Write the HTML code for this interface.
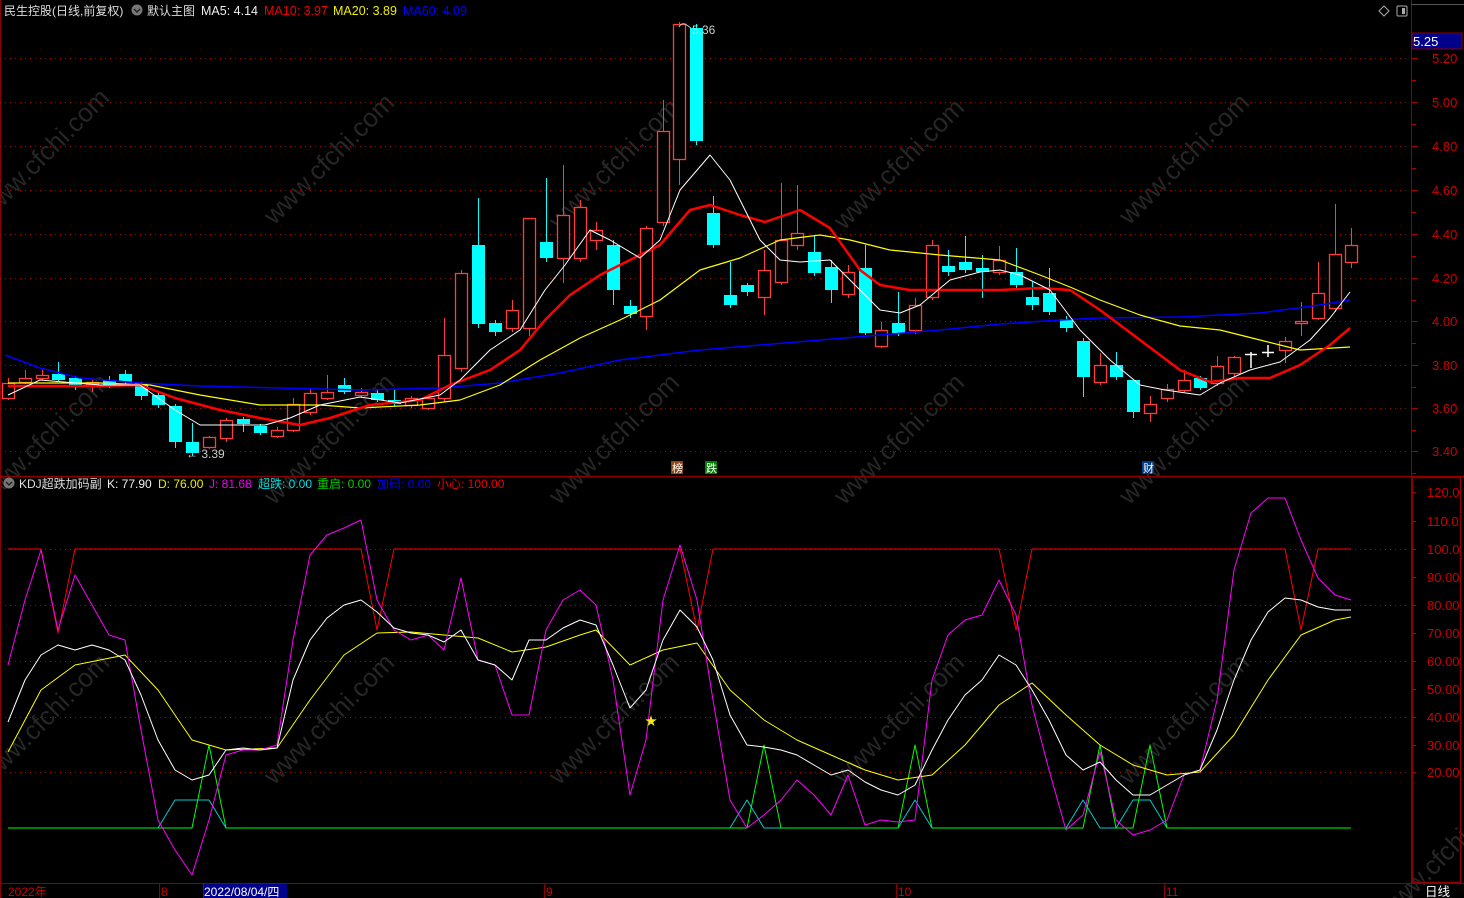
<!DOCTYPE html>
<html><head><meta charset="utf-8">
<style>
html,body{margin:0;padding:0;background:#000;width:1464px;height:898px;overflow:hidden}
svg{display:block}
text{font-family:"Liberation Sans","Noto Sans CJK SC",sans-serif}
</style></head>
<body>
<svg id="s" width="1464" height="898" xmlns="http://www.w3.org/2000/svg">
<rect width="1464" height="898" fill="#000"/>
<g id="wm"></g>
<g id="grid"></g>
<line x1="1411.5" y1="0" x2="1411.5" y2="898" stroke="#8b0000" stroke-width="1"/>
<line x1="0" y1="476.5" x2="1464" y2="476.5" stroke="#8b0000" stroke-width="1.5"/>
<line x1="0" y1="883.5" x2="1464" y2="883.5" stroke="#8b0000" stroke-width="1"/>
<line x1="0.5" y1="0" x2="0.5" y2="898" stroke="#8b0000"/>
<rect x="1412.5" y="477.5" width="48" height="405" fill="none" stroke="#8b0000" stroke-width="1.5"/>
<line x1="1411" y1="4.5" x2="1464" y2="4.5" stroke="#555"/>
<g id="cand"></g>
<g id="lines"></g>
<text x="4" y="15" font-size="12" fill="#ddd">民生控股(日线,前复权)</text>
<circle cx="137" cy="10" r="5.5" fill="#777"/><path d="M134 9 l3 3 l3 -3" stroke="#222" fill="none" stroke-width="1.5"/>
<text x="147" y="15" font-size="12" fill="#ddd">默认主图</text>
<text x="201" y="15" font-size="12.5" fill="#eee">MA5: 4.14</text>
<text x="264" y="15" font-size="12.5" fill="#e00">MA10: 3.97</text>
<text x="333" y="15" font-size="12.5" fill="#ee0">MA20: 3.89</text>
<text x="403" y="15" font-size="12.5" fill="#00f">MA60: 4.09</text>
<path d="M1384 6 l5 5 l-5 5 l-5 -5z" fill="none" stroke="#aaa"/>
<rect x="1397" y="6" width="10" height="10" fill="none" stroke="#aaa" rx="1"/><rect x="1402" y="8" width="3" height="6" fill="#aaa"/>
<text x="186" y="458" font-size="12" fill="#ccc">← 3.39</text>
<text x="692" y="34" font-size="12" fill="#ccc">5.36</text>
<path d="M679 27 q2 -4 6 -3 l6 4" fill="none" stroke="#ccc"/>
<rect x="671" y="461" width="12" height="13" fill="#8b4513"/><text x="672" y="472" font-size="11" fill="#fff">榜</text>
<rect x="705" y="461" width="12" height="13" fill="#008000"/><text x="706" y="472" font-size="11" fill="#fff">跌</text>
<rect x="1142" y="461" width="12" height="13" fill="#003a80"/><text x="1143" y="472" font-size="11" fill="#fff">财</text>
<rect x="1412" y="33" width="50" height="16" fill="#00008b" stroke="#8b0000"/>
<text x="1413" y="46" font-size="13" fill="#fff">5.25</text>
<g id="axis" font-size="13" fill="#c00"></g>
<circle cx="9" cy="483" r="5.5" fill="#777"/><path d="M6 482 l3 3 l3 -3" stroke="#222" fill="none" stroke-width="1.5"/>
<text x="19" y="488" font-size="12" fill="#ddd">KDJ超跌加码副</text>
<text x="107" y="488" font-size="12" fill="#eee">K: 77.90</text>
<text x="158" y="488" font-size="12" fill="#ee0">D: 76.00</text>
<text x="209" y="488" font-size="12" fill="#e0e">J: 81.68</text>
<text x="258" y="488" font-size="12" fill="#0dd">超跌: 0.00</text>
<text x="317" y="488" font-size="12" fill="#0c0">重启: 0.00</text>
<text x="377" y="488" font-size="12" fill="#00e">加码: 0.00</text>
<text x="437" y="488" font-size="12" fill="#e00">小心: 100.00</text>
<text x="645" y="725" font-size="12" fill="#ee0">★</text>
<text x="8" y="896" font-size="12" fill="#c00">2022年</text>
<line x1="159.5" y1="883" x2="159.5" y2="898" stroke="#8b0000"/><text x="161" y="896" font-size="12" fill="#c00">8</text>
<rect x="203" y="884" width="84" height="14" fill="#00008b"/><text x="204" y="896" font-size="12" fill="#fff">2022/08/04/四</text>
<line x1="203.5" y1="883" x2="203.5" y2="898" stroke="#8b0000"/>
<line x1="544.5" y1="883" x2="544.5" y2="898" stroke="#8b0000"/><text x="546" y="896" font-size="12" fill="#c00">9</text>
<line x1="896.5" y1="883" x2="896.5" y2="898" stroke="#8b0000"/><text x="898" y="896" font-size="12" fill="#c00">10</text>
<line x1="1164.5" y1="883" x2="1164.5" y2="898" stroke="#8b0000"/><text x="1166" y="896" font-size="12" fill="#c00">11</text>
<text x="1425" y="896" font-size="12.5" fill="#fff">日线</text>
</svg>
<script>
var NS="http://www.w3.org/2000/svg";
function el(p,t,a){var e=document.createElementNS(NS,t);for(var k in a)e.setAttribute(k,a[k]);p.appendChild(e);return e;}
var g=document.getElementById('grid'),ax=document.getElementById('axis');
var pl=[[58,'5.20'],[102,'5.00'],[146,'4.80'],[190,'4.60'],[234,'4.40'],[278,'4.20'],[321,'4.00'],[365,'3.80'],[408,'3.60'],[451,'3.40']];
pl.forEach(function(p){el(g,'line',{x1:0,y1:p[0]+.5,x2:1410,y2:p[0]+.5,stroke:'#a00','stroke-dasharray':'1 4'});
el(ax,'line',{x1:1412,y1:p[0]+.5,x2:1418,y2:p[0]+.5,stroke:'#a00'});el(ax,'line',{x1:1412,y1:p[0]+22.5,x2:1416,y2:p[0]+22.5,stroke:'#a00'});
var t=el(ax,'text',{x:1432,y:p[0]+5});t.textContent=p[1];});
var kl=[[492,'120.0'],[521,'110.0'],[549,'100.0'],[577,'90.00'],[605,'80.00'],[633,'70.00'],[661,'60.00'],[689,'50.00'],[717,'40.00'],[745,'30.00'],[772,'20.00']];
kl.forEach(function(p,i){if(i%2==0&&i>0)el(g,'line',{x1:0,y1:p[0]+.5,x2:1410,y2:p[0]+.5,stroke:'#a00','stroke-dasharray':'1 4'});
el(ax,'line',{x1:1412,y1:p[0]+.5,x2:1416,y2:p[0]+.5,stroke:'#a00'});var t=el(ax,'text',{x:1427,y:p[0]+5});t.textContent=p[1];});
var wm=document.getElementById('wm');
[[50,160],[335,165],[620,170],[905,170],[1190,165],[50,445],[335,445],[620,445],[905,445],[1190,445],[50,725],[335,725],[620,725],[905,725],[1190,725],[1450,860]].forEach(function(p){
var t=el(wm,'text',{x:p[0],y:p[1],'font-size':'26',fill:'#262626','text-anchor':'middle',transform:'rotate(-45 '+p[0]+' '+p[1]+')'});t.textContent='www.cfchi.com';});
var C=[[8,398,383,400,378],[25,382,378,384,370],[42,378,375,380,370],[58,374,380,362,382],[75,378,387,376,390],[92,384,382,380,392],[109,380,386,376,388],[125,374,382,370,384],[141,383,396,382,400],[158,395,405,392,408],[175,406,442,404,448],[192,442,453,423,456],[209,447,437,436,449],[226,438,420,418,442],[243,419,424,417,432],[260,426,433,424,435],[277,436,430,427,438],[293,430,404,398,432],[310,412,393,388,415],[327,398,392,375,400],[344,385,392,378,394],[361,395,392,388,398],[377,393,400,390,402],[394,400,404,390,406],[411,405,398,396,408],[428,408,398,396,410],[444,398,355,318,402],[461,368,273,270,372],[478,245,324,198,328],[495,323,332,320,336],[512,328,310,300,332],[529,328,218,218,336],[546,242,258,178,262],[563,258,215,165,283],[580,258,207,200,262],[596,240,230,222,250],[613,245,290,240,305],[630,306,314,300,318],[646,316,228,226,330],[663,222,131,100,226],[679,159,24,22,185],[696,28,141,24,145],[713,213,245,196,248],[730,295,305,262,308],[747,285,292,283,296],[764,297,270,250,315],[781,282,240,183,285],[797,245,233,185,250],[814,252,273,236,276],[831,267,290,260,303],[848,294,272,265,298],[865,268,333,245,335],[881,346,330,322,348],[898,323,333,292,336],[915,330,305,298,334],[932,297,245,240,300],[948,266,272,250,276],[965,262,270,236,273],[982,268,272,255,298],[999,272,260,246,275],[1016,272,285,248,290],[1032,297,305,282,310],[1049,293,312,268,315],[1066,319,328,316,332],[1083,341,377,338,397],[1100,382,365,353,385],[1116,365,377,352,380],[1133,380,412,380,418],[1150,413,404,396,422],[1167,398,389,384,402],[1184,390,380,370,392],[1200,378,388,376,390],[1217,383,366,356,386],[1234,373,357,356,376],[1251,354,355,352,368],[1268,352,353,345,357],[1285,350,341,337,363],[1301,323,321,302,336],[1318,318,293,262,320],[1335,308,254,204,312],[1351,262,245,228,268]];
var cg=document.getElementById('cand');
C.forEach(function(c){var x=c[0],o=c[1],cl=c[2],h=c[3],l=c[4];var up=cl<o,top=Math.min(o,cl),bot=Math.max(o,cl);
var col=up?'#ff3c3c':'#00ffff';
if(x==1251||x==1268){el(cg,'line',{x1:x-6,y1:top+.5,x2:x+6,y2:top+.5,stroke:'#fff','stroke-width':1.5});el(cg,'line',{x1:x,y1:h,x2:x,y2:l,stroke:'#fff','stroke-width':1.5});return;}
el(cg,'line',{x1:x+.5,y1:h,x2:x+.5,y2:top,stroke:col});el(cg,'line',{x1:x+.5,y1:bot,x2:x+.5,y2:l,stroke:col});
if(up)el(cg,'rect',{x:x-5.5,y:top+.5,width:12,height:Math.max(bot-top,1),fill:'#000',stroke:col,'stroke-width':1.3});
else el(cg,'rect',{x:x-6,y:top,width:13,height:Math.max(bot-top,2),fill:col});});
var lg=document.getElementById('lines');
function P(pts,col,w){el(lg,'polyline',{points:pts.map(function(p){return p.join(',')}).join(' '),fill:'none',stroke:col,'stroke-width':w||1,'stroke-linejoin':'round'});}
P([[5,355],[40,368],[80,378],[140,383],[200,386],[280,388],[360,390],[440,388],[500,383],[560,373],[620,360],[660,355],[700,350],[760,345],[820,340],[880,335],[940,330],[1000,324],[1060,320],[1100,318],[1180,317],[1260,313],[1320,305],[1350,300]],'#0000ff',1.5);
P([[8,383],[100,383],[150,385],[200,395],[260,405],[320,405],[360,408],[420,405],[460,400],[500,385],[540,360],[580,338],[620,320],[660,300],[700,270],[740,258],[780,240],[820,235],[850,240],[890,250],[940,255],[1000,260],[1040,275],[1070,287],[1100,300],[1140,315],[1180,326],[1220,330],[1260,340],[1300,350],[1350,347]],'#ffff00',1.2);
P([[8,386],[100,386],[140,385],[175,398],[220,410],[260,418],[300,425],[330,418],[370,405],[420,400],[450,385],[490,370],[520,350],[545,320],[570,295],[600,275],[630,260],[660,245],[690,210],[710,205],[740,215],[765,222],[800,210],[830,228],[860,270],[880,285],[910,290],[960,290],[1000,290],[1040,288],[1070,290],[1100,310],[1140,340],[1180,370],[1210,382],[1240,378],[1270,378],[1300,365],[1330,345],[1350,328]],'#ff0000',2.5);
P([[8,395],[40,380],[100,385],[140,385],[175,410],[200,425],[230,425],[265,425],[290,418],[320,405],[360,397],[400,403],[440,395],[460,380],[490,350],[520,330],[545,290],[565,265],[590,230],[610,240],[640,258],[660,240],[680,190],[710,155],[730,180],[760,240],[780,260],[800,262],[830,260],[860,290],[880,310],[900,313],[920,305],[950,280],[980,272],[1000,270],[1020,275],[1050,290],[1080,330],[1110,360],[1140,385],[1165,390],[1200,395],[1220,383],[1250,370],[1280,362],[1310,340],[1330,318],[1350,292]],'#ffffff',1);
P([[8,549],[41,549],[58,633],[75,549],[361,549],[377,630],[394,549],[680,549],[697,630],[713,549],[999,549],[1016,630],[1032,549],[1285,549],[1301,630],[1318,549],[1351,549]],'#ff0000',1);
P([[8,828],[158,828],[175,800],[209,800],[226,828],[730,828],[747,800],[764,828],[898,828],[915,800],[932,828],[1066,828],[1083,800],[1100,828],[1116,828],[1133,800],[1150,800],[1167,828],[1351,828]],'#00cccc',1);
P([[8,828],[192,828],[209,745],[226,828],[747,828],[764,745],[781,828],[898,828],[915,745],[932,828],[1083,828],[1100,745],[1116,828],[1133,828],[1150,745],[1167,828],[1351,828]],'#00ff00',1);
P([[8,752],[41,690],[75,665],[125,655],[158,690],[192,740],[226,750],[277,748],[310,700],[344,655],[377,633],[411,632],[444,635],[478,638],[512,652],[546,647],[580,635],[596,630],[630,665],[663,650],[697,643],[730,690],[764,720],[797,740],[831,755],[865,770],[898,780],[932,775],[965,745],[999,705],[1032,683],[1066,715],[1100,745],[1133,765],[1167,775],[1200,772],[1234,735],[1268,680],[1301,635],[1335,620],[1351,617]],'#ffff00',1);
P([[8,665],[25,600],[41,550],[58,630],[75,575],[92,605],[109,635],[125,640],[141,730],[158,820],[175,850],[192,875],[209,820],[226,755],[243,750],[260,750],[277,745],[293,640],[310,555],[327,535],[344,528],[361,520],[377,600],[394,630],[411,640],[428,635],[444,650],[461,578],[478,660],[495,665],[512,715],[529,715],[546,630],[563,600],[580,590],[596,605],[613,680],[630,795],[646,740],[663,600],[680,545],[697,600],[713,700],[730,800],[747,828],[764,815],[781,800],[797,780],[814,795],[831,815],[848,775],[865,825],[881,820],[898,822],[915,820],[932,680],[948,635],[965,620],[982,615],[999,580],[1016,615],[1032,705],[1049,770],[1066,830],[1083,815],[1100,752],[1116,820],[1133,835],[1150,830],[1167,820],[1184,775],[1200,770],[1217,700],[1234,570],[1251,513],[1268,498],[1285,498],[1301,540],[1318,578],[1335,595],[1351,600]],'#ff00ff',1);
P([[8,722],[25,680],[41,655],[58,645],[75,650],[92,645],[109,650],[125,660],[141,695],[158,740],[175,770],[192,780],[209,775],[226,750],[243,748],[260,750],[277,748],[293,680],[310,640],[327,618],[344,605],[361,600],[377,612],[394,628],[411,633],[428,635],[444,642],[461,630],[478,660],[495,665],[512,680],[529,640],[546,640],[563,628],[580,620],[596,625],[613,665],[630,708],[646,690],[663,640],[680,610],[697,627],[713,660],[730,715],[747,745],[764,747],[781,750],[797,755],[814,765],[831,775],[848,770],[865,782],[881,790],[898,795],[915,785],[932,750],[948,720],[965,695],[982,680],[999,655],[1016,665],[1032,690],[1049,720],[1066,755],[1083,770],[1100,762],[1116,780],[1133,795],[1150,795],[1167,785],[1184,775],[1200,770],[1217,730],[1234,680],[1251,640],[1268,612],[1285,598],[1301,600],[1318,607],[1335,610],[1351,610]],'#ffffff',1);
</script>
</body></html>
